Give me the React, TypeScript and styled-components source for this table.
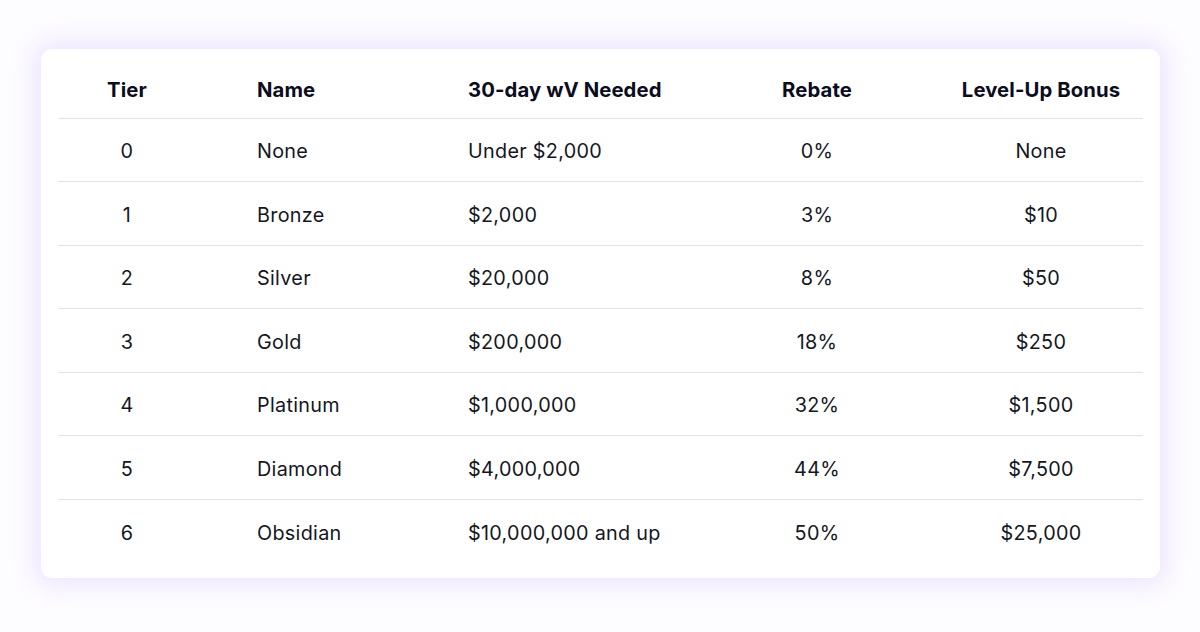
import React from "react";
import styled, { createGlobalStyle } from "styled-components";

const Global = createGlobalStyle`
  html, body { margin: 0; padding: 0; background: #fdfcff; }
  body { font-family: Inter, "Noto Sans", sans-serif; color: #10111f; }
`;

const Page = styled.div`
  width: 1200px;
  height: 632px;
  box-sizing: border-box;
  padding: 49px 40px 0 41px;
  background: #fdfcff;
`;

const Card = styled.div`
  width: 1119px;
  height: 529px;
  box-sizing: border-box;
  background: #ffffff;
  border-radius: 11px;
  box-shadow: 0 0 24px 6px rgba(160, 130, 255, 0.2);
  padding: 0 17px;
`;

const Row = styled.div<{ $head?: boolean; $last?: boolean }>`
  display: grid;
  grid-template-columns: 138px 272px 270px 158px 247px;
  align-items: center;
  height: ${(p) => (p.$head ? "69.5px" : "63.5px")};
  padding-top: ${(p) => (p.$head ? "12px" : "3px")};
  border-bottom: ${(p) => (p.$last ? "none" : "1.5px solid #e3e1ea")};
  box-sizing: border-box;
  font-size: ${(p) => (p.$head ? "20.3px" : "19.8px")};
  font-weight: ${(p) => (p.$head ? 700 : 400)};
  color: ${(p) => (p.$head ? "#0b0c1c" : "#15161f")};
  letter-spacing: ${(p) => (p.$head ? "0.1px" : "0.3px")};
`;

const Cell = styled.div<{ $align: "center" | "left"; $pad?: number }>`
  text-align: ${(p) => p.$align};
  padding-left: ${(p) => p.$pad ?? 0}px;
  white-space: nowrap;
`;

const rows = [
  ["0", "None", "Under $2,000", "0%", "None"],
  ["1", "Bronze", "$2,000", "3%", "$10"],
  ["2", "Silver", "$20,000", "8%", "$50"],
  ["3", "Gold", "$200,000", "18%", "$250"],
  ["4", "Platinum", "$1,000,000", "32%", "$1,500"],
  ["5", "Diamond", "$4,000,000", "44%", "$7,500"],
  ["6", "Obsidian", "$10,000,000 and up", "50%", "$25,000"],
];

const Cells: React.FC<{ data: string[] }> = ({ data }) => (
  <>
    <Cell $align="center">{data[0]}</Cell>
    <Cell $align="left" $pad={61}>{data[1]}</Cell>
    <Cell $align="left">{data[2]}</Cell>
    <Cell $align="center">{data[3]}</Cell>
    <Cell $align="center" $pad={43}>{data[4]}</Cell>
  </>
);

export default function App() {
  return (
    <>
      <Global />
      <Page>
        <Card>
          <Row $head>
            <Cells data={["Tier", "Name", "30-day wV Needed", "Rebate", "Level-Up Bonus"]} />
          </Row>
          {rows.map((r, i) => (
            <Row key={r[0]} $last={i === rows.length - 1}>
              <Cells data={r} />
            </Row>
          ))}
        </Card>
      </Page>
    </>
  );
}
